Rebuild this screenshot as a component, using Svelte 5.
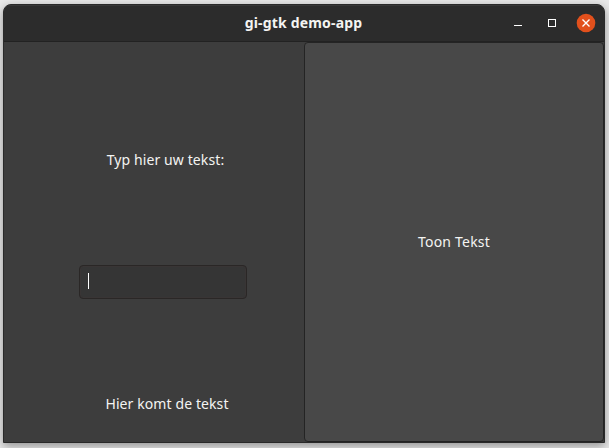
<script>
  let text = $state('');
  let shown = $state('Hier komt de tekst');
</script>

<div class="desktop">
  <main class="window">
    <header>
      <span></span>
      <h1>gi-gtk demo-app</h1>
      <div class="controls">
        <svg width="95" height="36" viewBox="0 0 95 36" fill="none">
          <path d="M5 20.5h8" stroke="#fff" />
          <rect x="39.5" y="14.5" width="7" height="7" stroke="#fff" />
          <circle cx="77" cy="18" r="9.3" fill="#e2501c" />
          <path d="M73.5 14.5l7 7m0-7l-7 7" stroke="#fff" stroke-width="1.4" />
        </svg>
      </div>
    </header>
    <div class="content">
      <section>
        <p class="prompt">Typ hier uw tekst:</p>
        <div class="entry"><span class="value">{text}</span><i class="caret"></i></div>
        <p class="result">{shown}</p>
      </section>
      <button onclick={() => (shown = text)}><span>Toon Tekst</span></button>
    </div>
  </main>
</div>

<style>
  :global(body) { margin: 0; overflow: hidden; }
  .desktop {
    box-sizing: border-box;
    width: 609px;
    height: 448px;
    padding: 4px 4px 5px 3px;
    overflow: hidden;
    background: #e9e9e9;
    font-family: "Noto Sans", sans-serif;
    font-size: 14px;
    color: #f4f4f2;
  }
  .window {
    box-sizing: border-box;
    width: 602px;
    height: 439px;
    display: flex;
    flex-direction: column;
    border: 1px solid #2a2a2a;
    border-radius: 8px 8px 0 0;
    overflow: hidden;
    background: #3d3d3d;
    box-shadow: 0 3px 10px rgba(0, 0, 0, 0.38);
  }
  header {
    box-sizing: border-box;
    height: 37px;
    flex: none;
    display: grid;
    grid-template-columns: 1fr auto 1fr;
    align-items: center;
    background: #2c2c2c;
    border-bottom: 1px solid #222;
    box-shadow: inset 0 1px #383838;
  }
  h1 {
    margin: 0 0 0 -1px;
    font-size: 14px;
    line-height: 20px;
    font-weight: 700;
    letter-spacing: 0.17px;
    white-space: nowrap;
  }
  .controls { display: flex; justify-content: flex-end; }
  .controls svg { display: block; }
  .content { flex: 1; display: grid; grid-template-columns: 300px 300px; }
  section { display: flex; flex-direction: column; align-items: center; }
  p { margin: 0; line-height: 20px; white-space: nowrap; letter-spacing: 0.1px; }
  .prompt { padding: 108px 0 0 23px; }
  .entry {
    box-sizing: border-box;
    width: 168px;
    height: 34px;
    margin: 95px 0 0 18px;
    padding: 0 8px;
    display: flex;
    align-items: center;
    border: 1px solid #2a2726;
    border-radius: 4px;
    background: #353535;
    box-shadow: inset 0 0 0 1px #393535;
  }
  .caret { width: 1px; height: 16px; margin-bottom: 2px; background: #fff; }
  .result { padding: 95px 0 0 26px; }
  button {
    box-sizing: border-box;
    width: 300px;
    height: 400px;
    padding: 0;
    border: 1px solid #242424;
    border-radius: 4px;
    background: #484848;
    color: inherit;
    font: inherit;
    line-height: 20px;
    letter-spacing: 0.2px;
  }
</style>
